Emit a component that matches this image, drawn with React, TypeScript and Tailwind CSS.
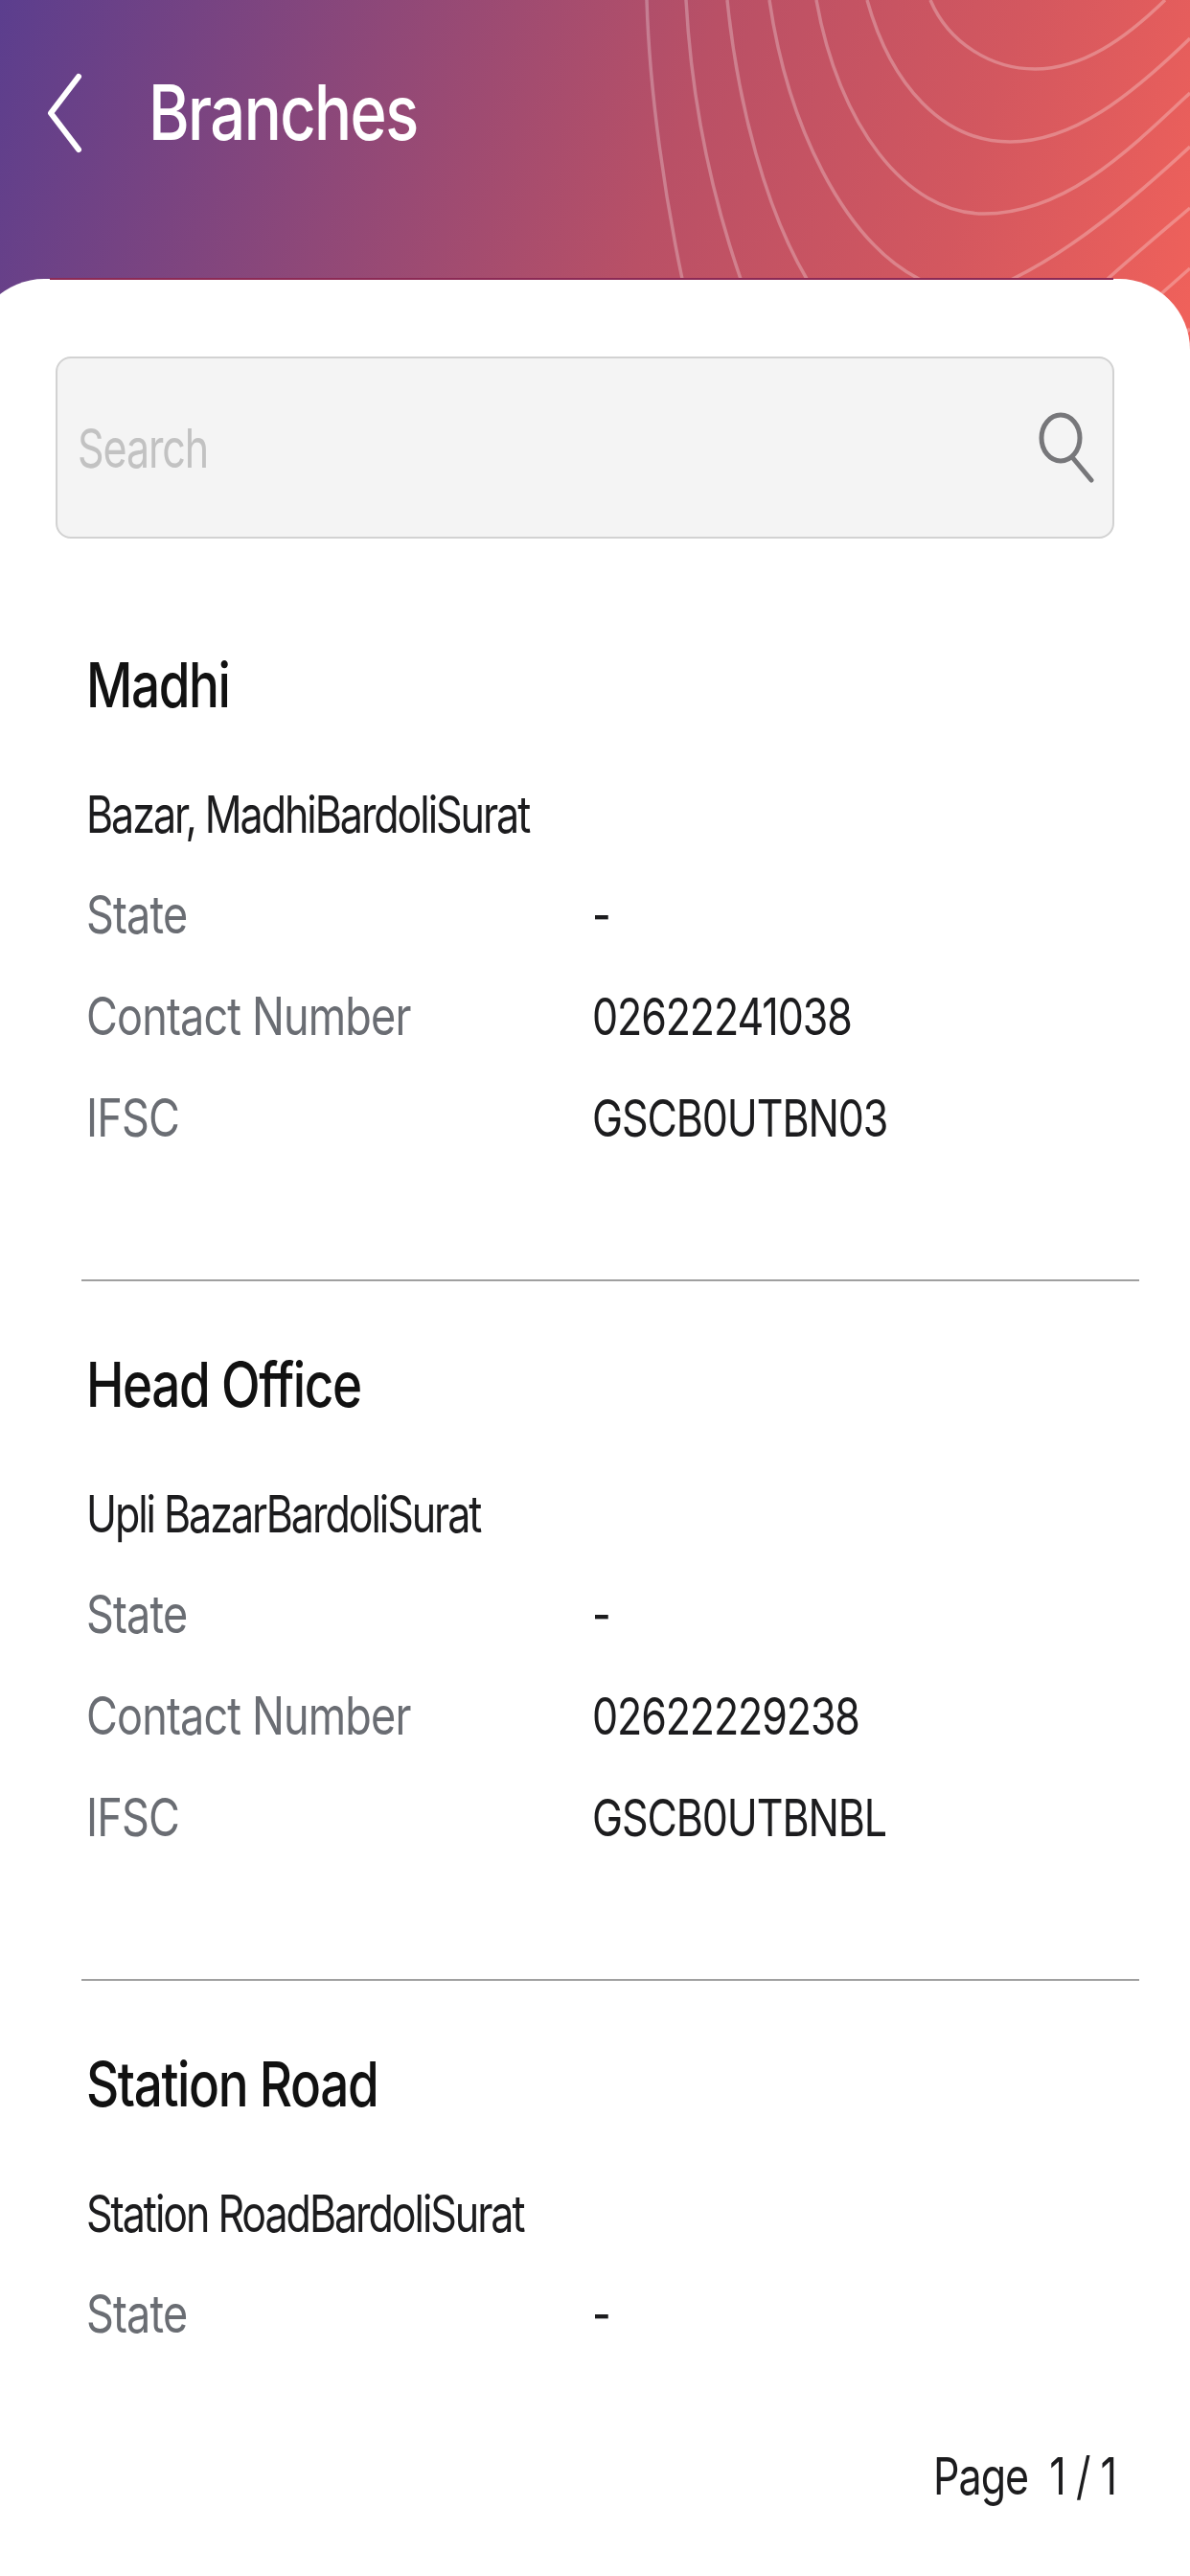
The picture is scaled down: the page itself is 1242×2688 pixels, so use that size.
const branches = [
  { name: "Madhi", address: "Bazar, MadhiBardoliSurat", state: "-", contact: "02622241038", ifsc: "GSCB0UTBN03" },
  { name: "Head Office", address: "Upli BazarBardoliSurat", state: "-", contact: "02622229238", ifsc: "GSCB0UTBNBL" },
  { name: "Station Road", address: "Station RoadBardoliSurat", state: "-" },
];

type BranchItem = { name: string; address: string; state: string; contact?: string; ifsc?: string };

const Row = ({ label, value }: { label: string; value: string }) => (
  <div className="flex h-[106px] items-center">
    <span className="w-[528px] origin-left scale-y-[1.22] text-[45px] tracking-[-0.85px] text-[#6a6d73]">{label}</span>
    <span className="origin-left scale-y-[1.25] text-[43px] tracking-[-1.1px] text-[#1c1c1e]">{value}</span>
  </div>
);

const Branch = ({ item, last }: { item: BranchItem; last?: boolean }) => (
  <div className={last ? "pt-[59px]" : "border-b-2 border-[#a0a0a0] pt-[59px] pb-[116px]"}>
    <div className="flex h-[100px] items-center pl-[5px]">
      <span className="origin-left scale-y-[1.22] text-[53px] font-medium tracking-[-1.4px] text-[#111111]">{item.name}</span>
    </div>
    <div className="mt-[32px] flex h-[103px] items-center pl-[5px]">
      <span className="origin-left scale-y-[1.25] text-[43px] tracking-[-2.05px] text-[#1c1c1e]">{item.address}</span>
    </div>
    <div className="pl-[5px]">
      <Row label="State" value={item.state} />
      {item.contact && <Row label="Contact Number" value={item.contact} />}
      {item.ifsc && <Row label="IFSC" value={item.ifsc} />}
    </div>
  </div>
);

export default function App() {
  return (
    <div className="relative h-[2688px] w-[1242px] overflow-hidden bg-white font-['Inter',sans-serif]">
      {/* header */}
      <div className="relative h-[400px] bg-[linear-gradient(108deg,#5b3e8e_0%,#8f4878_30%,#b95066_55%,#d3575f_78%,#f2625a_100%)]">
        <svg className="absolute top-0 left-0" width="1242" height="400" viewBox="0 0 1242 400" fill="none" stroke="#ffffff" strokeOpacity="0.27" strokeWidth="3.5">
          <path d="M971 0C990 45 1035 72 1080 72C1130 72 1175 40 1216 0" />
          <path d="M905 0C930 90 985 148 1054 148C1120 148 1180 100 1242 40" />
          <path d="M852 0C875 130 945 223 1027 223C1110 223 1175 160 1242 97" />
          <path d="M803 0C822 130 880 250 959 291C990 305 1030 305 1057 291C1120 260 1180 210 1242 153" />
          <path d="M759 0C770 110 800 220 842 291M1156 291C1185 265 1215 240 1242 217" />
          <path d="M716 0C722 110 745 210 773 291M1208 310L1242 280" />
          <path d="M675 0C678 100 695 210 712 291" />
          <path d="M1225 360L1242 343" />
        </svg>
        <div className="relative flex h-[236px] items-center pl-[48px]">
          <svg width="40" height="84" viewBox="0 0 40 84" fill="none" stroke="#ffffff" strokeWidth="6" strokeLinecap="round" strokeLinejoin="round">
            <path d="M34 4L5 42L34 80" />
          </svg>
          <span className="ml-[67px] origin-left scale-y-[1.22] text-[65px] font-medium tracking-[-1.6px] text-white">Branches</span>
        </div>
      </div>

      {/* card */}
      <div className="relative -mt-[109px] -ml-[28px] flex h-[2397px] w-[1270px] flex-col rounded-t-[74px] bg-white">
        {/* thin dark edge along the flat top of the card */}
        <div className="absolute top-[-1px] left-[80px] h-[2px] w-[1110px] bg-[#8c2a55]" />
        <div className="mt-[81px] ml-[86px] flex h-[190px] w-[1105px] shrink-0 items-center justify-between rounded-[16px] border-2 border-[#d2d2d2] bg-[#f4f4f4] pr-[20px] pl-[21px]">
          <span className="origin-left scale-y-[1.3] text-[43px] tracking-[-1.1px] text-[#c2c2c2]">Search</span>
          <svg className="translate-x-[1px]" width="58" height="74" viewBox="0 0 58 74" fill="none" stroke="#77777a" strokeWidth="5">
            <ellipse cx="23" cy="27" rx="20" ry="24" />
            <path d="M35 47L55 71" strokeLinecap="round" />
          </svg>
        </div>
        <div className="mt-[45px] ml-[113px] min-h-0 w-[1104px] flex-1 overflow-hidden">
          {branches.map((b, i) => (
            <Branch key={b.name} item={b} last={i === branches.length - 1} />
          ))}
        </div>
        <div className="flex h-[112px] shrink-0 items-center justify-end pr-[77px]">
          <span className="origin-right scale-y-[1.25] text-[43px] tracking-[-1px] text-[#1c1c1e]">Page&nbsp;&nbsp;1 / 1</span>
        </div>
        <div className="h-[49px] shrink-0" />
      </div>
    </div>
  );
}
